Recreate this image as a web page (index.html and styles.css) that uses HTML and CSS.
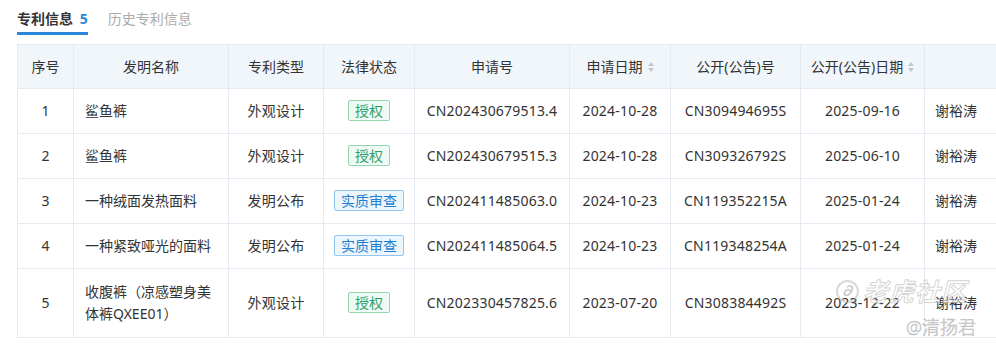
FILE: index.html
```html
<!DOCTYPE html>
<html lang="zh">
<head>
<meta charset="utf-8">
<link rel="stylesheet" href="styles.css">
</head>
<body>
<div class="page">
  <div class="tabs">
    <div class="tab active">专利信息 <span class="count">5</span></div>
    <div class="tab">历史专利信息</div>
  </div>
  <table class="grid">
    <colgroup>
      <col class="c-idx"><col class="c-name"><col class="c-type"><col class="c-law"><col class="c-app"><col class="c-appd"><col class="c-pub"><col class="c-pubd"><col class="c-inv">
    </colgroup>
    <thead>
      <tr>
        <th>序号</th>
        <th>发明名称</th>
        <th>专利类型</th>
        <th>法律状态</th>
        <th>申请号</th>
        <th><span class="sortable">申请日期<span class="sort"><i class="up"></i><i class="down"></i></span></span></th>
        <th>公开(公告)号</th>
        <th><span class="sortable">公开(公告)日期<span class="sort"><i class="up"></i><i class="down"></i></span></span></th>
        <th></th>
      </tr>
    </thead>
    <tbody>
      <tr>
        <td>1</td><td class="name">鲨鱼裤</td><td>外观设计</td><td><span class="tag green">授权</span></td>
        <td>CN202430679513.4</td><td>2024-10-28</td><td>CN309494695S</td><td>2025-09-16</td><td class="inv">谢裕涛</td>
      </tr>
      <tr>
        <td>2</td><td class="name">鲨鱼裤</td><td>外观设计</td><td><span class="tag green">授权</span></td>
        <td>CN202430679515.3</td><td>2024-10-28</td><td>CN309326792S</td><td>2025-06-10</td><td class="inv">谢裕涛</td>
      </tr>
      <tr>
        <td>3</td><td class="name">一种绒面发热面料</td><td>发明公布</td><td><span class="tag blue">实质审查</span></td>
        <td>CN202411485063.0</td><td>2024-10-23</td><td>CN119352215A</td><td>2025-01-24</td><td class="inv">谢裕涛</td>
      </tr>
      <tr>
        <td>4</td><td class="name">一种紧致哑光的面料</td><td>发明公布</td><td><span class="tag blue">实质审查</span></td>
        <td>CN202411485064.5</td><td>2024-10-23</td><td>CN119348254A</td><td>2025-01-24</td><td class="inv">谢裕涛</td>
      </tr>
      <tr class="tall">
        <td>5</td><td class="name">收腹裤（凉感塑身美体裤QXEE01）</td><td>外观设计</td><td><span class="tag green">授权</span></td>
        <td>CN202330457825.6</td><td>2023-07-20</td><td>CN308384492S</td><td>2023-12-22</td><td class="inv">谢裕涛</td>
      </tr>
    </tbody>
  </table>
  <div class="watermark">
    <div class="wm-brand"><span class="wm-logo">∂</span>老虎社区</div>
    <div class="wm-user">@清扬君</div>
  </div>
</div>
</body>
</html>
```
FILE: styles.css
```css
html, body {
  margin: 0;
  padding: 0;
  background: #ffffff;
  overflow: hidden;
}
body {
  width: 996px;
  height: 354px;
  font-family: "Noto Sans", "Noto Sans CJK SC", sans-serif;
  font-size: 14px;
  color: #333333;
}
.page {
  position: relative;
  padding: 0 0 0 17px;
  height: 354px;
  box-sizing: border-box;
}
.tabs {
  display: flex;
  gap: 20px;
  height: 35px;
  margin-bottom: 9px;
}
.tab {
  padding-top: 9px;
  line-height: 20px;
  height: 23px;
  color: #ababab;
  font-size: 14px;
  white-space: nowrap;
}
.tab.active {
  color: #333333;
  font-weight: 600;
  border-bottom: 3px solid #2a86d9;
}
.tab .count {
  color: #2a86d9;
  font-weight: 700;
  margin-left: 3px;
}
.grid {
  border-collapse: collapse;
  table-layout: fixed;
  width: 987px;
}
.c-idx { width: 56px; }
.c-name { width: 155px; }
.c-type { width: 95px; }
.c-law { width: 91px; }
.c-app { width: 155px; }
.c-appd { width: 101px; }
.c-pub { width: 130px; }
.c-pubd { width: 124px; }
.c-inv { width: 80px; }
.grid th, .grid td {
  border: 1px solid #e5ebf1;
  text-align: center;
  font-weight: 400;
  padding: 0 10px;
  line-height: 22px;
  white-space: normal;
}
.grid td { letter-spacing: 0.2px; }
.grid th {
  background: #f1f6fb;
  height: 43px;
  color: #333333;
  white-space: nowrap;
  padding: 0 4px;
}
.grid tbody tr { height: 45px; }
.grid tbody tr.tall { height: 69px; }
.grid td.name { text-align: left; padding: 0 8px 0 11px; letter-spacing: 0; }
.grid td.inv { text-align: left; padding-left: 10px; letter-spacing: 0; }
.sortable {
  display: inline-flex;
  align-items: center;
}
.sort {
  display: inline-flex;
  flex-direction: column;
  gap: 2px;
  margin-left: 5px;
}
.sort i {
  display: block;
  width: 0;
  height: 0;
  border-left: 3px solid transparent;
  border-right: 3px solid transparent;
}
.sort .up { border-bottom: 4px solid #c3c7cd; }
.sort .down { border-top: 4px solid #c3c7cd; }
.tag {
  display: inline-block;
  font-size: 14px;
  line-height: 19px;
  padding: 0 6px;
  border: 1px solid;
  border-radius: 2px;
  letter-spacing: 0;
}
.tag.green {
  color: #2ea167;
  background: #f0faf4;
  border-color: #95d6ad;
}
.tag.blue {
  color: #1f7fd0;
  background: #eef6fd;
  border-color: #92c6ef;
}
.watermark {
  position: absolute;
  left: 836px;
  top: 276px;
  width: 145px;
  pointer-events: none;
}
.wm-brand {
  display: flex;
  align-items: center;
  font-size: 25px;
  font-style: italic;
  font-weight: 700;
  color: rgba(255, 255, 255, 0.6);
  -webkit-text-stroke: 1px rgba(160, 160, 160, 0.45);
  letter-spacing: 1px;
  line-height: 30px;
}
.wm-logo {
  display: inline-flex;
  align-items: center;
  justify-content: center;
  width: 19px;
  height: 19px;
  border: 2px solid rgba(170, 170, 170, 0.45);
  border-radius: 50%;
  font-size: 14px;
  margin-right: 4px;
  -webkit-text-stroke: 0;
  color: rgba(160, 160, 160, 0.55);
}
.wm-user {
  margin-top: 10px;
  margin-left: 70px;
  font-size: 18px;
  font-weight: 300;
  line-height: 22px;
  color: rgba(255, 255, 255, 0.7);
  -webkit-text-stroke: 0.6px rgba(140, 140, 140, 0.6);
  white-space: nowrap;
}
```
